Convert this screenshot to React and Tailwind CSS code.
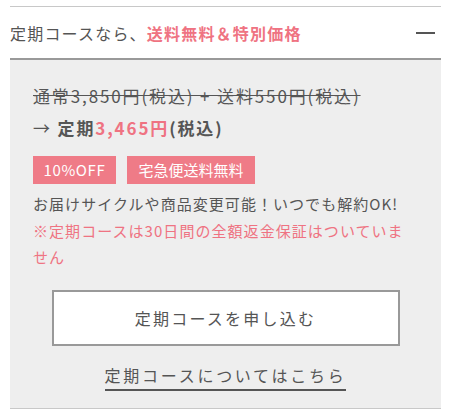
import React from 'react';

const font = { fontFamily: '"Noto Sans CJK JP", "Noto Sans", sans-serif' };

const App = () => {
  return (
    <div className="min-h-[414px] w-[451px] bg-white px-[10px] pt-[6px] text-[#555]" style={font}>
      <div className="border-t border-[#c8c8c8]">
        {/* Header */}
        <div className="flex h-[53px] items-center justify-between border-b-2 border-[#999]">
          <p className="text-[16px] tracking-[0.075em]">
            定期コースなら、<span className="font-bold text-[#ef7382]">送料無料＆特別価格</span>
          </p>
          <span className="mr-[6px] block h-[2px] w-[19px] bg-[#555]"></span>
        </div>

        {/* Panel */}
        <div className="border-b border-[#c8c8c8] bg-[#eeeeee] px-[23px] pt-[20px] pb-[17px]">
          <p className="text-[17px] leading-[32px] tracking-[0.11em] line-through decoration-[#555]">
            通常3,850円(税込) + 送料550円(税込)
          </p>
          <p className="text-[17px] leading-[32px] tracking-[0.11em] font-bold">
            <span className="font-normal">→ </span>定期<span className="text-[#ef7382]">3,465円</span>(税込)
          </p>
          <div className="mt-[12px] flex gap-[11px]">
            <span className="flex h-[28px] w-[83px] items-center justify-center bg-[#ef7b87] text-[15px] tracking-[0.04em] text-white">10%OFF</span>
            <span className="flex h-[28px] w-[128px] items-center justify-center bg-[#ef7b87] text-[15px] text-white">宅急便送料無料</span>
          </div>
          <p className="mt-[7px] text-[15px] leading-[26.5px] tracking-[0.07em]">お届けサイクルや商品変更可能！いつでも解約OK!</p>
          <p className="text-[15px] leading-[26.5px] tracking-[0.07em] text-[#ef7382]">
            ※定期コースは30日間の全額返金保証はついていません
          </p>
          <button className="mx-auto mt-[19px] flex h-[56px] w-[348px] items-center justify-center border-2 border-[#999] bg-white text-[16px] tracking-[0.14em] text-[#555]">
            定期コースを申し込む
          </button>
          <div className="mt-[17px] flex justify-center">
            <a className="border-b-2 border-[#555] pb-[2px] text-[16px] leading-[24px] tracking-[0.17em]">
              定期コースについてはこちら
            </a>
          </div>
        </div>
      </div>
    </div>
  );
};

export default App;
